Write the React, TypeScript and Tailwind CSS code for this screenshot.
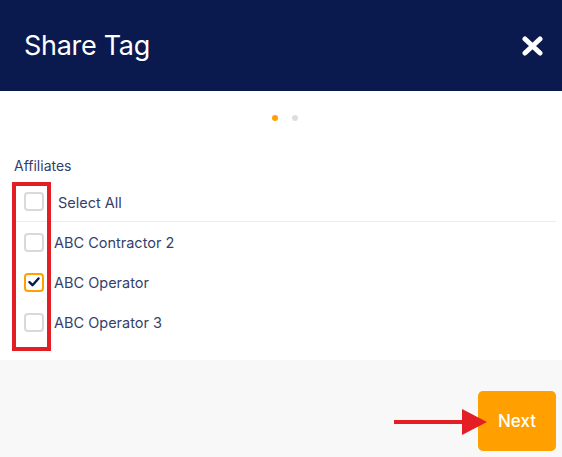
import React from "react";

const items = [
  { label: "ABC Contractor 2", checked: false },
  { label: "ABC Operator", checked: true },
  { label: "ABC Operator 3", checked: false },
];

function Box({ checked }: { checked: boolean }) {
  return (
    <div
      className={
        checked
          ? "w-[20px] h-[19px] rounded-[4px] border-2 border-[#ffa000] bg-white flex items-center justify-center shrink-0"
          : "w-[20px] h-[19px] rounded-[4px] border-2 border-[#d9d9d9] bg-white shrink-0"
      }
    >
      {checked && (
        <svg width="12" height="10" viewBox="0 0 12 10">
          <path d="M1.5 5.2 L4.5 8.2 L10.5 1.5" fill="none" stroke="#0b1a4d" strokeWidth="2.4" strokeLinecap="round" strokeLinejoin="round" />
        </svg>
      )}
    </div>
  );
}

export default function App() {
  return (
    <div className="relative w-[562px] h-[457px] flex flex-col bg-white overflow-hidden" style={{ fontFamily: "Inter, 'Noto Sans', sans-serif" }}>
      <div className="h-[91px] bg-[#0b1a4e] flex items-center justify-between pl-[24px] pr-[19px] shrink-0">
        <span className="text-white text-[27px] leading-none tracking-[-0.3px] pb-[1px]">Share Tag</span>
        <svg width="21" height="20" viewBox="0 0 21 20" className="mt-[1px]">
          <path d="M3 3 L18 17 M18 3 L3 17" stroke="#fff" strokeWidth="5" strokeLinecap="round" />
        </svg>
      </div>
      <div className="flex flex-col pt-[24px] pb-[18px] shrink-0">
        <div className="flex justify-center gap-[14px] pl-[8px]">
          <div className="w-[6px] h-[6px] rounded-full bg-[#ffa000]" />
          <div className="w-[6px] h-[6px] rounded-full bg-[#dddddd]" />
        </div>
        <div className="mt-[35px] pl-[14px] text-[14px] leading-[20px] text-[#343f6b]">Affiliates</div>
        <div className="mt-[6px] ml-[14px] mr-[6px] flex flex-col text-[14.5px] text-[#343f6b]">
          <div className="h-[40px] flex items-center pl-[10px] gap-[14px] border-b border-[#ececec]">
            <Box checked={false} />
            <span className="pt-[2px]">Select All</span>
          </div>
          {items.map((it) => (
            <div key={it.label} className="h-[40px] flex items-center pl-[10px] gap-[10px]">
              <Box checked={it.checked} />
              <span className="pt-[1px]">{it.label}</span>
            </div>
          ))}
        </div>
      </div>
      <div className="flex-1 bg-[#f8f8f8] flex justify-end items-start pt-[31px] pr-[6px]">
        <button className="w-[78px] h-[60px] rounded-[5px] bg-[#ffa000] text-white text-[17px] font-medium pt-[2px]">Next</button>
      </div>
      <div className="absolute left-[12px] top-[182px] w-[39px] h-[169px] border-4 border-[#e31e24]" />
      <svg className="absolute left-[394px] top-[409px]" width="93" height="26" viewBox="0 0 93 26">
        <rect x="0" y="11" width="70" height="4" fill="#e31e24" />
        <polygon points="68,0 93,13 68,26" fill="#e31e24" />
      </svg>
    </div>
  );
}
